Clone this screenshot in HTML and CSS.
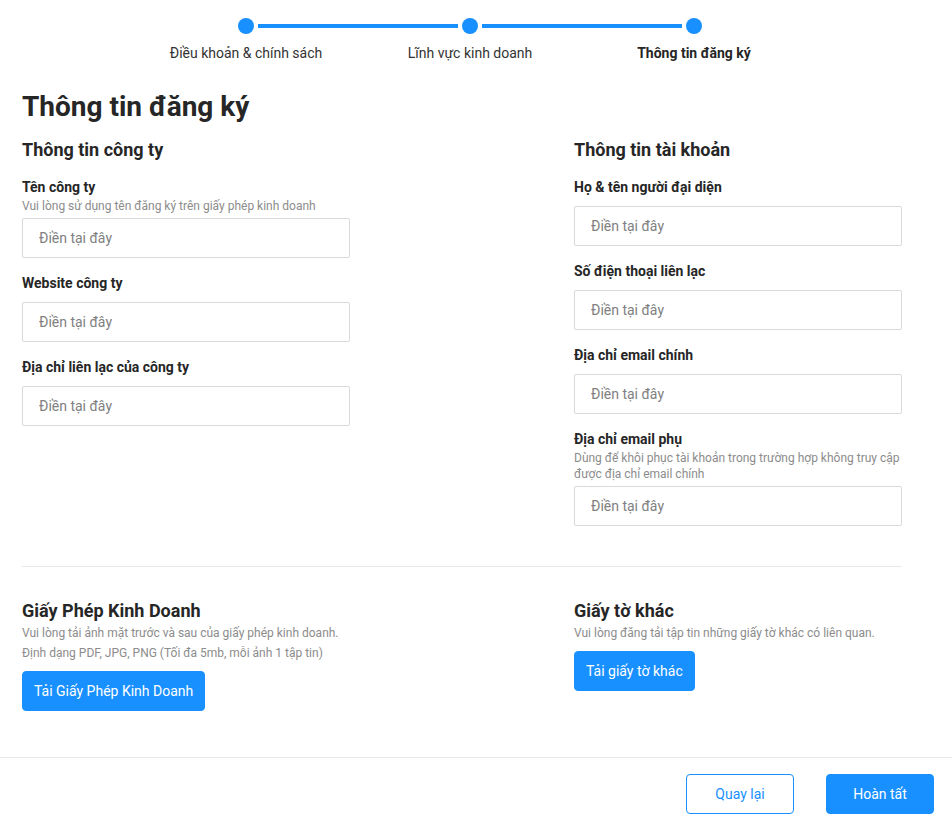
FILE: index.html
```html
<!DOCTYPE html>
<html lang="vi">
<head>
<meta charset="utf-8">
<title>Thông tin đăng ký</title>
<link rel="stylesheet" href="styles.css">
</head>
<body>
<div class="stepper">
  <div class="track">
    <span class="dot"></span><span class="line"></span><span class="dot"></span><span class="line"></span><span class="dot"></span>
  </div>
  <div class="labels">
    <span>Điều khoản &amp; chính sách</span>
    <span>Lĩnh vực kinh doanh</span>
    <span class="active">Thông tin đăng ký</span>
  </div>
</div>

<main class="content">
  <h1 class="title">Thông tin đăng ký</h1>
  <div class="cols">
    <section class="col">
      <h2 class="section-title">Thông tin công ty</h2>
      <div class="field">
        <label class="label">Tên công ty</label>
        <div class="hint">Vui lòng sử dụng tên đăng ký trên giấy phép kinh doanh</div>
        <input class="input" placeholder="Điền tại đây">
      </div>
      <div class="field">
        <label class="label">Website công ty</label>
        <input class="input" placeholder="Điền tại đây">
      </div>
      <div class="field">
        <label class="label">Địa chỉ liên lạc của công ty</label>
        <input class="input" placeholder="Điền tại đây">
      </div>
    </section>
    <section class="col">
      <h2 class="section-title">Thông tin tài khoản</h2>
      <div class="field">
        <label class="label">Họ &amp; tên người đại diện</label>
        <input class="input" placeholder="Điền tại đây">
      </div>
      <div class="field">
        <label class="label">Số điện thoại liên lạc</label>
        <input class="input" placeholder="Điền tại đây">
      </div>
      <div class="field">
        <label class="label">Địa chỉ email chính</label>
        <input class="input" placeholder="Điền tại đây">
      </div>
      <div class="field">
        <label class="label">Địa chỉ email phụ</label>
        <div class="hint">Dùng để khôi phục tài khoản trong trường hợp không truy cập được địa chỉ email chính</div>
        <input class="input" placeholder="Điền tại đây">
      </div>
    </section>
  </div>

  <hr class="divider">

  <div class="cols">
    <section class="col">
      <h2 class="section-title">Giấy Phép Kinh Doanh</h2>
      <p class="note">Vui lòng tải ảnh mặt trước và sau của giấy phép kinh doanh.<br>Định dạng PDF, JPG, PNG (Tối đa 5mb, mỗi ảnh 1 tập tin)</p>
      <button class="btn btn-primary">Tải Giấy Phép Kinh Doanh</button>
    </section>
    <section class="col">
      <h2 class="section-title">Giấy tờ khác</h2>
      <p class="note">Vui lòng đăng tải tập tin những giấy tờ khác có liên quan.</p>
      <button class="btn btn-primary">Tải giấy tờ khác</button>
    </section>
  </div>
</main>

<footer class="footer">
  <button class="btn btn-outline btn-wide">Quay lại</button>
  <button class="btn btn-primary btn-wide">Hoàn tất</button>
</footer>
</body>
</html>
```

FILE: styles.css
```css
* { box-sizing: border-box; }

body {
  margin: 0;
  font-family: Roboto, "Noto Sans", sans-serif;
  color: #262626;
  background: #fff;
}

.stepper {
  width: 672px;
  margin-left: 134px;
  padding-top: 18px;
}

.track {
  display: flex;
  align-items: center;
  padding: 0 104px;
}

.dot {
  width: 16px;
  height: 16px;
  border-radius: 50%;
  background: #1890ff;
  flex: none;
}

.line {
  flex: 1;
  height: 4px;
  margin: 0 4px;
  background: #1890ff;
}

.labels {
  display: grid;
  grid-template-columns: repeat(3, 1fr);
  margin-top: 9px;
  font-size: 14px;
  line-height: 20px;
  text-align: center;
  color: #333;
}

.labels .active { font-weight: 700; color: #262626; }

.content {
  width: 880px;
  margin-left: 22px;
}

.title {
  margin: 26px 0 13px;
  font-size: 28px;
  line-height: 36px;
  font-weight: 700;
}

.cols {
  display: grid;
  grid-template-columns: 328px 328px;
  column-gap: 224px;
  align-items: start;
}

.section-title {
  margin: 0;
  font-size: 18px;
  line-height: 24px;
  font-weight: 700;
}

.field {
  display: flex;
  flex-direction: column;
  margin-top: 15px;
}

.label {
  font-size: 14px;
  line-height: 20px;
  font-weight: 700;
  margin-bottom: 9px;
}

.label + .hint { margin-top: -8px; }

.hint {
  font-size: 12px;
  line-height: 16px;
  color: #8c8c8c;
  margin-bottom: 4px;
}

.input {
  height: 40px;
  border: 1px solid #d9d9d9;
  border-radius: 2px;
  padding: 0 16px;
  font: 14px Roboto, "Noto Sans", sans-serif;
  color: #262626;
  outline: none;
}

.input::placeholder { color: #808080; }

.divider {
  margin: 40px 0 32px;
  border: 0;
  border-top: 1px solid #e8e8e8;
}

.note {
  margin: 0 0 8px;
  font-size: 12px;
  line-height: 20px;
  color: #8c8c8c;
}

.btn {
  height: 40px;
  padding: 0 11px;
  border-radius: 4px;
  font: 14px Roboto, "Noto Sans", sans-serif;
  cursor: pointer;
}

.btn-primary {
  background: #1890ff;
  border: 1px solid #1890ff;
  color: #fff;
}

.btn-outline {
  background: #fff;
  border: 1px solid #1890ff;
  color: #1890ff;
}

.btn-wide { width: 108px; }

.footer {
  margin-top: 46px;
  border-top: 1px solid #e8e8e8;
  display: flex;
  justify-content: flex-end;
  gap: 32px;
  padding: 16px 18px 6px 0;
}
```
